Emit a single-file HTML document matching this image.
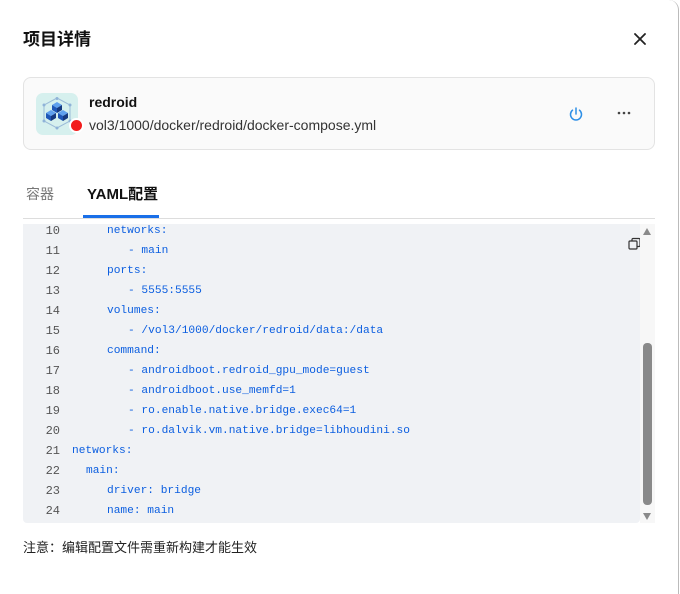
<!DOCTYPE html>
<html><head><meta charset="utf-8"><style>
*{margin:0;padding:0;box-sizing:border-box}
body{width:680px;height:594px;background:#fff;font-family:"Liberation Sans","Noto Sans CJK SC",sans-serif;position:relative;overflow:hidden}
.dlg{position:absolute;left:0;top:0;width:679px;height:594px;border-right:1px solid #bbb;border-radius:0 10px 0 0;background:#fff}
.abs{position:absolute}
.code{position:absolute;left:23px;top:224px;width:617px;height:299px;background:#f0f2f5;border-radius:0 0 4px 4px;font-family:"Liberation Mono",monospace;font-size:11.2px;color:#0b5ee0}
.ln{position:absolute;left:0;width:37px;text-align:right;color:#555;font-size:12px}
.t{position:absolute;white-space:pre}
.code .ln,.code .t{line-height:14px}
</style></head><body>
<div class="dlg">
<div class="abs" style="left:23px;top:30px;font-size:17px;font-weight:bold;color:#111;line-height:20px">项目详情</div>
<svg class="abs" style="left:634px;top:33px" width="12" height="12" viewBox="0 0 12 12"><path d="M1 1L11 11M11 1L1 11" stroke="#222" stroke-width="1.8" stroke-linecap="round"/></svg>
<div class="abs" style="left:23px;top:77px;width:632px;height:73px;border:1px solid #e3e3e3;border-radius:8px;background:#fafafa"></div>
<div class="abs" style="left:36px;top:93px;width:42px;height:42px;background:#d6f0ee;border-radius:7px"></div>
<svg class="abs" style="left:41px;top:96px" width="32" height="34" viewBox="0 0 32 34"><polygon points="16,2 29,9 29,25 16,32 3,25 3,9" fill="none" stroke="#9bbbd8" stroke-width="1"/><circle cx="16" cy="2.5" r="1.5" fill="#8fb3d8"/><circle cx="3" cy="9" r="1.5" fill="#8fb3d8"/><circle cx="29" cy="9" r="1.5" fill="#8fb3d8"/><circle cx="3" cy="25" r="1.5" fill="#8fb3d8"/><circle cx="29" cy="25" r="1.5" fill="#8fb3d8"/><circle cx="16" cy="32" r="1.5" fill="#8fb3d8"/><polygon points="16,6 21,9 16,12 11,9" fill="#5fa0ee"/><polygon points="11,9 16,12 16,17 11,14" fill="#1f57b8"/><polygon points="21,9 16,12 16,17 21,14" fill="#163a80"/><polygon points="10,14 15,17 10,20 5,17" fill="#5fa0ee"/><polygon points="5,17 10,20 10,25 5,22" fill="#1f57b8"/><polygon points="15,17 10,20 10,25 15,22" fill="#163a80"/><polygon points="22,14 27,17 22,20 17,17" fill="#5fa0ee"/><polygon points="17,17 22,20 22,25 17,22" fill="#1f57b8"/><polygon points="27,17 22,20 22,25 27,22" fill="#163a80"/></svg>
<div class="abs" style="left:69px;top:118px;width:15px;height:15px;border-radius:50%;background:#f21c1c;border:2px solid #fff"></div>
<div class="abs" style="left:89px;top:94px;font-size:14px;font-weight:bold;color:#111">redroid</div>
<div class="abs" style="left:89px;top:117px;font-size:14px;color:#333">vol3/1000/docker/redroid/docker-compose.yml</div>
<svg class="abs" style="left:568px;top:106px" width="16" height="16" viewBox="0 0 16 16"><path d="M4.5 4.2A5.5 5.5 0 1 0 11.5 4.2" fill="none" stroke="#2d8fe6" stroke-width="1.5" stroke-linecap="round"/><path d="M8 2v6" stroke="#2d8fe6" stroke-width="1.5" stroke-linecap="round"/></svg>
<svg class="abs" style="left:617px;top:111px" width="14" height="4"><circle cx="2" cy="2" r="1.3" fill="#444"/><circle cx="7" cy="2" r="1.3" fill="#444"/><circle cx="12" cy="2" r="1.3" fill="#444"/></svg>
<div class="abs" style="left:26px;top:184px;font-size:14px;color:#777">容器</div>
<div class="abs" style="left:87px;top:183px;font-size:15px;font-weight:bold;color:#111">YAML配置</div>
<div class="abs" style="left:23px;top:218px;width:632px;height:1px;background:#ddd"></div>
<div class="abs" style="left:83px;top:215px;width:76px;height:3px;background:#1a6fe8"></div>
<div class="code">
<div class="ln" style="top:0">10</div><div class="t" style="left:84px;top:0">networks:</div>
<div class="ln" style="top:20px">11</div><div class="t" style="left:105px;top:20px">- main</div>
<div class="ln" style="top:40px">12</div><div class="t" style="left:84px;top:40px">ports:</div>
<div class="ln" style="top:60px">13</div><div class="t" style="left:105px;top:60px">- 5555:5555</div>
<div class="ln" style="top:80px">14</div><div class="t" style="left:84px;top:80px">volumes:</div>
<div class="ln" style="top:100px">15</div><div class="t" style="left:105px;top:100px">- /vol3/1000/docker/redroid/data:/data</div>
<div class="ln" style="top:120px">16</div><div class="t" style="left:84px;top:120px">command:</div>
<div class="ln" style="top:140px">17</div><div class="t" style="left:105px;top:140px">- androidboot.redroid_gpu_mode=guest</div>
<div class="ln" style="top:160px">18</div><div class="t" style="left:105px;top:160px">- androidboot.use_memfd=1</div>
<div class="ln" style="top:180px">19</div><div class="t" style="left:105px;top:180px">- ro.enable.native.bridge.exec64=1</div>
<div class="ln" style="top:200px">20</div><div class="t" style="left:105px;top:200px">- ro.dalvik.vm.native.bridge=libhoudini.so</div>
<div class="ln" style="top:220px">21</div><div class="t" style="left:49px;top:220px">networks:</div>
<div class="ln" style="top:240px">22</div><div class="t" style="left:63px;top:240px">main:</div>
<div class="ln" style="top:260px">23</div><div class="t" style="left:84px;top:260px">driver: bridge</div>
<div class="ln" style="top:280px">24</div><div class="t" style="left:84px;top:280px">name: main</div>
</div>
<svg class="abs" style="left:628px;top:237px" width="14" height="14" viewBox="0 0 14 14"><rect x="1" y="4" width="8" height="8" rx="1" fill="#f0f2f5" stroke="#333" stroke-width="1.2"/><path d="M4 4V2.5a1 1 0 0 1 1-1h6a1 1 0 0 1 1 1v6a1 1 0 0 1-1 1H9" fill="none" stroke="#333" stroke-width="1.2"/></svg>
<div class="abs" style="left:640px;top:224px;width:15px;height:299px;background:#f7f7f7"></div>
<div class="abs" style="left:643px;top:228px;width:0;height:0;border-left:4.5px solid transparent;border-right:4.5px solid transparent;border-bottom:7px solid #8a8a8a"></div>
<div class="abs" style="left:643px;top:343px;width:9px;height:162px;background:#8a8a8a;border-radius:4px"></div>
<div class="abs" style="left:643px;top:513px;width:0;height:0;border-left:4.5px solid transparent;border-right:4.5px solid transparent;border-top:7px solid #8a8a8a"></div>
<div class="abs" style="left:23px;top:537px;font-size:13px;color:#222">注意：编辑配置文件需重新构建才能生效</div>
</div>
</body></html>
